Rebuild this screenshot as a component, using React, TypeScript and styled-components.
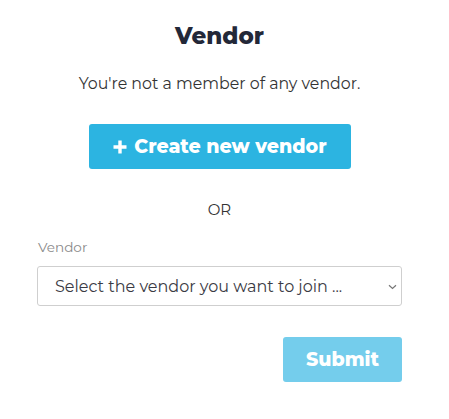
import React from "react";
import styled, { createGlobalStyle } from "styled-components";

const Global = createGlobalStyle`
  html, body { margin: 0; padding: 0; background: #fff; }
  body { font-family: "Montserrat", "Lato", "Noto Sans", sans-serif; }
`;

const Page = styled.div`
  width: 365px;
  margin-left: 37px;
  padding-top: 22px;
  display: flex;
  flex-direction: column;
`;

const Title = styled.h1`
  margin: 0;
  text-align: center;
  font-size: 23px;
  font-weight: 800;
  color: #232838;
  line-height: 28px;
`;

const Sub = styled.p`
  margin: 24px 0 0;
  text-align: center;
  font-size: 15.8px;
  color: #333;
  line-height: 20px;
`;

const Center = styled.div`
  display: flex;
  justify-content: center;
  margin-top: 30px;
`;

const Button = styled.button<{ $light?: boolean }>`
  height: 45px;
  border: none;
  border-radius: 3px;
  background: ${(p) => (p.$light ? "#74cdec" : "#2cb4e1")};
  color: #fff;
  font-family: inherit;
  font-weight: 800;
  font-size: 19px;
  display: flex;
  align-items: center;
  justify-content: center;
  gap: 6px;
  cursor: pointer;
`;

const CreateButton = styled(Button)`
  width: 262px;
`;

const Or = styled.div`
  margin-top: 31px;
  text-align: center;
  font-size: 15px;
  color: #333;
  line-height: 20px;
`;

const Label = styled.label`
  margin-top: 18px;
  font-size: 13.6px;
  color: #8a8a8a;
  padding-left: 1px;
  line-height: 18px;
`;

const SelectWrap = styled.div`
  position: relative;
  margin-top: 10px;
  width: 365px;
`;

const Select = styled.select`
  display: block;
  appearance: none;
  -webkit-appearance: none;
  height: 40px;
  width: 100%;
  border: 1px solid #cfcfcf;
  border-radius: 3px;
  background: #fff;
  font-family: inherit;
  font-size: 16px;
  color: #3a3a44;
  padding: 0 30px 0 17px;
  outline: none;
`;

const Chevron = styled.svg`
  position: absolute;
  right: 5px;
  top: 18px;
  pointer-events: none;
`;

const Actions = styled.div`
  display: flex;
  justify-content: flex-end;
  margin-top: 31px;
`;

const SubmitButton = styled(Button)`
  width: 119px;
`;

export default function App() {
  return (
    <>
      <Global />
      <Page>
        <Title>Vendor</Title>
        <Sub>You're not a member of any vendor.</Sub>
        <Center>
          <CreateButton>
            <svg width="16" height="16" viewBox="0 0 16 16">
              <path d="M8 1.5v13M1.5 8h13" stroke="#fff" strokeWidth="3.4" />
            </svg>
            Create new vendor
          </CreateButton>
        </Center>
        <Or>OR</Or>
        <Label>Vendor</Label>
        <SelectWrap>
          <Select defaultValue="">
            <option value="">Select the vendor you want to join ...</option>
          </Select>
          <Chevron width="9" height="6" viewBox="0 0 9 6">
            <path d="M1 1.2l3.5 3.3L8 1.2" stroke="#777" strokeWidth="1.2" fill="none" />
          </Chevron>
        </SelectWrap>
        <Actions>
          <SubmitButton $light>Submit</SubmitButton>
        </Actions>
      </Page>
    </>
  );
}
